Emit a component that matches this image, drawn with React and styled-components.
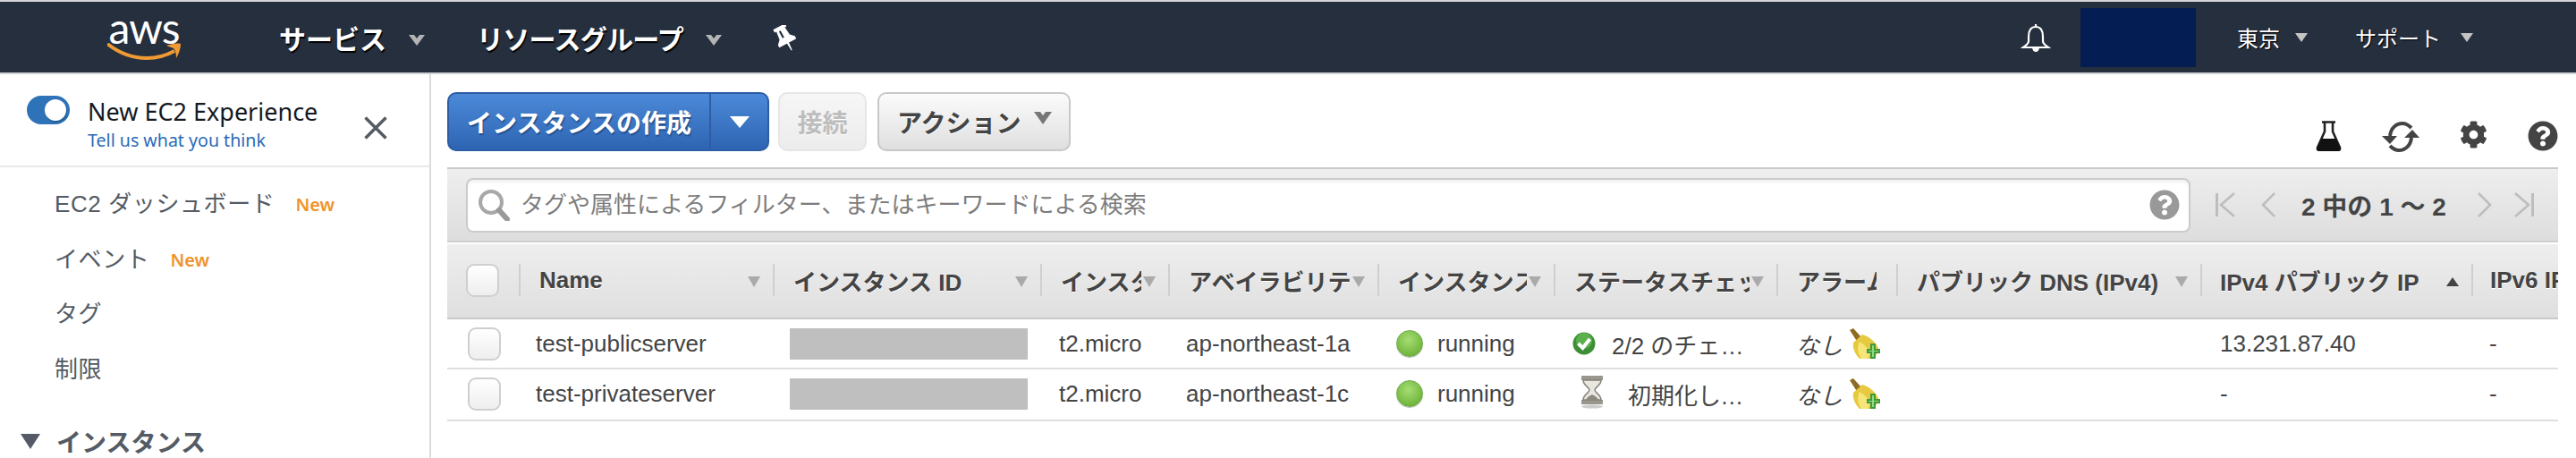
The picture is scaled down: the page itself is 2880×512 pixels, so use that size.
import React from 'react';
import styled, { createGlobalStyle } from 'styled-components';
import { FaCog, FaQuestionCircle } from 'react-icons/fa';

const GlobalStyle = createGlobalStyle`
  html, body {
    margin: 0;
    padding: 0;
    background: #fff;
  }
  * {
    box-sizing: border-box;
  }
  body {
    font-family: "Liberation Sans", "Noto Sans CJK JP", sans-serif;
  }
`;

const Page = styled.div`
  width: 2880px;
  height: 512px;
  overflow: hidden;
  background: #fff;
`;

const Header = styled.header`
  height: 83px;
  display: flex;
  align-items: center;
  padding-left: 120px;
  background: #262f3e;
  border-top: 2px solid #d5d5d5;
  border-bottom: 2px solid #cfd0d2;
  color: #fff;
`;

const Logo = styled.div`
  width: 82px;
  height: 56px;
  margin-right: 110px;
  display: flex;
  flex-direction: column;
  align-items: center;
`;

const LogoText = styled.span`
  font-family: Lato, sans-serif;
  font-size: 48px;
  line-height: 34px;
  height: 34px;
  color: #fff;
  letter-spacing: -1px;
`;

const NavItem = styled.div`
  display: flex;
  align-items: center;
  font-size: 30px;
  font-weight: 700;
  letter-spacing: ${p => p.$tight ? '-0.7px' : '0'};
  margin-right: ${p => p.$gap}px;
  text-shadow: 1px 2px 1px #000;
`;

const NavChevronIcon = styled.svg`
  width: 18px;
  height: 12px;
  margin: 6px 0 0 25px;
`;

const PinSvg = styled.svg`
  width: 28px;
  height: 30px;
  margin: 2px 0 0 57px;
`;

const RightNav = styled.div`
  margin-left: auto;
  display: flex;
  align-items: center;
  height: 100%;
`;

const Masked = styled.div`
  width: 129px;
  height: 66px;
  margin: 0 46px 0 33px;
  background: #041d52;
`;

const RegionItem = styled.div`
  display: flex;
  align-items: center;
  font-size: 24px;
  margin-right: ${p => p.$gap}px;
  text-shadow: 1px 1px 1px #000;
`;

const SmallCaret = styled.svg`
  width: 14px;
  height: 10px;
  margin-left: ${p => p.$left}px;
`;

const Body = styled.div`
  display: flex;
  height: 429px;
`;

const Sidebar = styled.aside`
  width: 482px;
  flex-shrink: 0;
  border-right: 2px solid #dcdcdc;
  overflow: hidden;
`;

const Experience = styled.div`
  height: 104px;
  display: flex;
  align-items: flex-start;
  padding: 24px 47px 0 30px;
  border-bottom: 2px solid #e8e8e8;
`;

const Toggle = styled.div`
  width: 48px;
  height: 32px;
  margin-right: 20px;
  padding-right: 4px;
  display: flex;
  align-items: center;
  justify-content: flex-end;
  border-radius: 16px;
  background: #2e73b8;
`;

const Knob = styled.span`
  width: 24px;
  height: 24px;
  border-radius: 50%;
  background: #fff;
  box-shadow: 1px 2px 0 #235f99;
`;

const ExperienceText = styled.div`
  flex: 1;
  font-family: "Noto Sans", sans-serif;
`;

const ExperienceTitle = styled.div`
  font-size: 27px;
  line-height: 36px;
  color: #16191f;
`;

const FeedbackLink = styled.div`
  font-size: 19.6px;
  line-height: 28px;
  color: #2a6ab8;
`;

const CloseIcon = styled.svg`
  width: 26px;
  height: 26px;
  margin-top: 23px;
`;

const SideList = styled.nav`
  padding: 8px 0 0 61px;
`;

const SideItem = styled.div`
  height: 61.5px;
  display: flex;
  align-items: center;
  font-size: 26px;
  letter-spacing: 0.6px;
  color: #545b64;
`;

const NewBadge = styled.span`
  margin-left: ${p => p.$left}px;
  margin-top: 6px;
  font-family: "Noto Sans", sans-serif;
  font-size: 20px;
  font-weight: 600;
  letter-spacing: 0;
  color: #f0932b;
`;

const SideGroup = styled.div`
  display: flex;
  align-items: center;
  margin: 32px 0 0 23px;
  font-size: 28px;
  font-weight: 700;
  color: #545b64;
`;

const GroupArrow = styled.span`
  width: 0;
  height: 0;
  margin-right: 18px;
  border-left: 11px solid transparent;
  border-right: 11px solid transparent;
  border-top: 17px solid #545b64;
`;

const Main = styled.main`
  flex: 1;
  min-width: 0;
  padding: 20px 20px 0 18px;
`;

const Toolbar = styled.div`
  height: 66px;
  display: flex;
  align-items: stretch;
`;

const ButtonGroup = styled.div`
  width: 360px;
  display: flex;
  border: 2px solid #2c5da5;
  border-radius: 10px;
  overflow: hidden;
  margin-right: 10px;
  background: linear-gradient(#4b89d8, #2e65b2);
`;

const PrimaryLabel = styled.div`
  width: 293px;
  padding-left: 20px;
  display: flex;
  align-items: center;
  font-size: 28px;
  font-weight: 700;
  color: #fff;
  text-shadow: 1px 2px 1px #24508f;
  border-right: 2px solid #2c5da5;
`;

const PrimaryCaret = styled.div`
  flex: 1;
  display: flex;
  align-items: center;
  justify-content: center;

  &::after {
    content: "";
    width: 0;
    height: 0;
    border-left: 11px solid transparent;
    border-right: 11px solid transparent;
    border-top: 13px solid #fff;
  }
`;

const GrayButton = styled.div`
  width: ${p => p.$width}px;
  display: flex;
  align-items: center;
  justify-content: ${p => p.$center ? 'center' : 'flex-start'};
  padding-left: ${p => p.$center ? 0 : 20}px;
  margin-right: 12px;
  border: 2px solid ${p => p.$off ? '#e6e6e6' : '#c8c8c8'};
  border-radius: 10px;
  background: linear-gradient(${p => p.$off ? '#f6f6f6, #ececec' : '#fbfbfb, #dfdfdf'});
  font-size: 28px;
  font-weight: 700;
  color: ${p => p.$off ? '#bdbdbd' : '#444'};
  text-shadow: 0 1px 1px #fff;
`;

const ActionChevron = styled.svg`
  width: 20px;
  height: 14px;
  margin: 0 0 8px 14px;
`;

const ToolIcons = styled.div`
  margin-left: auto;
  padding-top: 32px;
  display: flex;
  align-items: flex-start;
  color: #444;
`;

const ToolSlot = styled.div`
  margin-left: ${p => p.$left}px;
  display: flex;
`;

const FilterBar = styled.div`
  height: 84px;
  margin-top: 18px;
  display: flex;
  align-items: center;
  padding-left: 21px;
  border-top: 2px solid #c9c9c9;
  border-bottom: 2px solid #cfcfcf;
  background: linear-gradient(#eeeeee, #dddddd);
`;

const SearchBox = styled.div`
  width: 1928px;
  height: 61px;
  display: flex;
  align-items: center;
  padding: 0 10px 0 11px;
  border: 2px solid #cbcbcb;
  border-radius: 8px;
  background: #fff;
  box-shadow: inset 0 4px 4px -2px #ececec;
  color: #999;
`;

const SearchSvg = styled.svg`
  width: 36px;
  height: 36px;
  flex-shrink: 0;
`;

const SearchInput = styled.input`
  flex: 1;
  margin-left: 12px;
  border: 0;
  outline: 0;
  padding: 0;
  background: transparent;
  font-family: "Liberation Sans", "Noto Sans CJK JP", sans-serif;
  font-size: 26px;

  &::placeholder {
    color: #7d7d7d;
    opacity: 1;
  }
`;

const Pager = styled.div`
  width: 391px;
  display: flex;
  align-items: center;
  padding-left: 28px;
`;

const PagerIcon = styled.svg`
  height: 28px;
  width: ${p => p.$width}px;
  margin-right: ${p => p.$right}px;
  flex-shrink: 0;
`;

const PagerText = styled.div`
  width: 165px;
  margin-right: 32px;
  font-size: 28px;
  font-weight: 700;
  letter-spacing: 0;
  color: #444;
  white-space: nowrap;
`;

const COLUMNS = '80px 284px 299px 143px 234px 197px 249px 134px 340px 303px 220px';

const TableWrap = styled.div`
  margin-top: 2px;
  overflow: hidden;
`;

const HeadRow = styled.div`
  height: 84px;
  display: grid;
  grid-template-columns: ${COLUMNS};
  padding-top: 22px;
  border-bottom: 2px solid #c9c9c9;
  background: linear-gradient(#eeeeee, #dfdfdf);
`;

const HeadCell = styled.div`
  height: 36px;
  display: flex;
  align-items: center;
  padding-left: ${p => p.$left ?? 21}px;
  padding-right: ${p => p.$noArrow ? 22 : 0}px;
  border-left: ${p => p.$first ? 0 : '2px solid #cfcfcf'};
  min-width: 0;
`;

const HeadLabel = styled.div`
  flex: 1;
  min-width: 0;
  overflow: hidden;
  white-space: nowrap;
  font-size: 26px;
  font-weight: 700;
  color: #444;
  text-shadow: 0 1px 0 #fff;
`;

const SortArrow = styled.span`
  width: 0;
  height: 0;
  margin: 4px 14px 0 2px;
  flex-shrink: 0;
  border-left: 7px solid transparent;
  border-right: 7px solid transparent;
  border-top: ${p => p.$up ? '0' : '12px solid #aaa'};
  border-bottom: ${p => p.$up ? '10px solid #444' : '0'};
`;

const CheckBox = styled.div`
  width: 37px;
  height: 37px;
  border: 2px solid #cfcfcf;
  border-radius: 9px;
  background: linear-gradient(#ffffff, #eeeeee);
`;

const Row = styled.div`
  height: 56px;
  display: grid;
  grid-template-columns: ${COLUMNS};
  border-bottom: 2px solid #dedede;

  &:last-child {
    height: 58px;
    padding-bottom: 2px;
  }
`;

const Cell = styled.div`
  display: flex;
  align-items: center;
  padding-left: ${p => p.$left ?? 21}px;
  min-width: 0;
  font-size: 26px;
  color: #444;
  white-space: nowrap;
  font-style: ${p => p.$italic ? 'italic' : 'normal'};
`;

const MaskedId = styled.div`
  width: 266px;
  height: 35px;
  background: #bfbfbf;
`;

const StatusText = styled.span`
  margin-left: ${p => p.$left}px;
  width: ${p => p.$width}px;
  overflow: hidden;
  text-overflow: ellipsis;
`;

const HourglassSvg = styled.svg`
  width: 28px;
  height: 38px;
  margin-bottom: 4px;
`;

const BroomSvg = styled.svg`
  width: 36px;
  height: 34px;
  margin-left: 7px;
  flex-shrink: 0;
`;

const RunningDot = styled.span`
  width: 30px;
  height: 30px;
  margin-right: 16px;
  border-radius: 50%;
  border: 1px solid #6fa94a;
  background: radial-gradient(circle at 45% 35%, #a6dd75, #6fb53a 75%);
  box-shadow: 0 1px 1px #bbb;
`;

const Caret = ({ left }) => (
  <SmallCaret $left={left} viewBox="0 0 14 10">
    <path d="M0 0h14L7 10z" fill="#c4c4c4" />
  </SmallCaret>
);

const NavChevron = () => (
  <NavChevronIcon viewBox="0 0 18 12">
    <path d="M0 0h6l3 4 3-4h6L9 12z" fill="#b4b4b4" />
  </NavChevronIcon>
);

const AwsLogo = () => (
  <Logo>
    <LogoText>aws</LogoText>
    <svg width="82" height="20" viewBox="0 0 82 20">
      <path d="M0 1C14 12 30 17 44 17 56 17 66 14 75 9" fill="none" stroke="#f09a34" strokeWidth="4" />
      <path d="M66 3C72 1 78 0 82 1 82 6 80 12 77 17 77 12 76 8 74 6z" fill="#f09a34" />
    </svg>
  </Logo>
);

const PinIcon = () => (
  <PinSvg viewBox="0 0 26 28">
    <g transform="rotate(-28 13 14)">
      <path d="M6 0h14v3.500h-2l1 9 4 4v3H3v-3l4-4 1-9H6z" fill="#fff" />
      <path d="M12 19h2.400l-.7 9h-1z" fill="#fff" />
      <path d="M10.500 4.500h2v8h-2z" fill="#262f3e" />
    </g>
  </PinSvg>
);

const BellIcon = () => (
  <svg width="34" height="32" viewBox="0 0 34 32">
    <path
      d="M17 1v3M17 4c-6 0-8 5-8 11v5c0 3-3 5-6 7h28c-3-2-6-4-6-7v-5c0-6-2-11-8-11z"
      fill="none"
      stroke="#fff"
      strokeWidth="2.200"
    />
    <path d="M13 27h8c0 3-2 5-4 5s-4-2-4-5z" fill="#fff" />
  </svg>
);

const FlaskIcon = () => (
  <svg width="31" height="34" viewBox="0 0 31 34">
    <path d="M8 1.500h15M11 2v10L3 30c-.5 1.500 0 2.500 2 2.500h21c2 0 2.500-1 2-2.500L20 12V2" fill="none" stroke="#222" strokeWidth="2.600" />
    <path d="M7.500 20h16L29 32c0 1-1 2-3 2H5c-2 0-3-1-3-2z" fill="#111" />
  </svg>
);

const RefreshIcon = () => (
  <svg width="42" height="36" viewBox="0 0 42 36">
    <path d="M9 17C10 8 16 3 23 3c4 0 7 2 10 5" fill="none" stroke="#444" strokeWidth="4" />
    <path d="M33 19c-1 9-7 14-14 14-4 0-7-2-10-5" fill="none" stroke="#444" strokeWidth="4" />
    <path d="M0 17h17l-8 9zM25 19h17l-8-9z" fill="#444" />
  </svg>
);

const SearchIcon = () => (
  <SearchSvg viewBox="0 0 36 36">
    <circle cx="15" cy="15" r="12" fill="none" stroke="#a8a8a8" strokeWidth="4" />
    <path d="M24 24l9 10" stroke="#999" strokeWidth="6" strokeLinecap="round" />
  </SearchSvg>
);

const PagerChevron = ({ dir, bar, width, right }) => (
  <PagerIcon $width={width} $right={right} viewBox={`0 0 ${width} 28`}>
    {bar && <path d={dir === 'l' ? 'M1.500 1v26' : `M${width - 1.500} 1v26`} stroke="#bdbdbd" strokeWidth="3" />}
    <path
      d={dir === 'l'
        ? `M${width - 1} 1L${bar ? 6 : 2} 14l${width - (bar ? 7 : 3)} 13`
        : `M1 1l${width - (bar ? 7 : 3)} 13L1 27`}
      fill="none"
      stroke="#bdbdbd"
      strokeWidth="2.600"
    />
  </PagerIcon>
);

const CheckIcon = () => (
  <svg width="26" height="28" viewBox="0 0 26 28">
    <circle cx="13" cy="14" r="12.500" fill="#3c8f36" />
    <circle cx="13" cy="11" r="9" fill="#5cb04e" />
    <path d="M6.500 14l5 5 8-10" fill="none" stroke="#fff" strokeWidth="4" />
  </svg>
);

const HourglassIcon = () => (
  <HourglassSvg viewBox="0 0 28 38">
    <path d="M2 1h24v5H2zM2 28h24v5H2z" fill="#9a978f" />
    <path d="M4 6h20c0 6-7 8-7 11s7 5 7 11H4c0-6 7-8 7-11S4 12 4 6z" fill="#e9e7e0" stroke="#86837b" strokeWidth="1.500" />
    <path d="M7 28c1-3 5-5 7-6 2 1 6 3 7 6z" fill="#8c8980" />
    <ellipse cx="14" cy="35.500" rx="12" ry="2" fill="#ccc" />
  </HourglassSvg>
);

const BroomIcon = () => (
  <BroomSvg viewBox="0 0 36 34">
    <path d="M1 2l4-2 10 11-5 5z" fill="#8f6a25" />
    <path d="M5 16l10-9c8 2 15 8 19 17l-6 10H12C7 29 4 22 5 16z" fill="#e6c93f" />
    <path d="M12 15c5 3 10 8 12 13l-3 6h-7c-4-6-5-13-2-19z" fill="#f6e679" />
    <path d="M24 17h6v6h5v5h-5v6h-6v-6h-4v-5h4z" fill="#3f9a3b" />
    <path d="M26 19h2v6h5v1h-5v6h-2v-6h-4v-1h4z" fill="#8fdc7e" />
  </BroomSvg>
);

const headers = [
  { label: 'Name' },
  { label: 'インスタンス ID' },
  { label: 'インスタンスタイプ' },
  { label: 'アベイラビリティーゾーン' },
  { label: 'インスタンスの状態' },
  { label: 'ステータスチェック' },
  { label: 'アラームのステータス', noArrow: true },
  { label: 'パブリック DNS (IPv4)' },
  { label: 'IPv4 パブリック IP', up: true, left: 20 },
  { label: 'IPv6 IP', noArrow: true, left: 19 },
];

const rows = [
  {
    name: 'test-publicserver',
    zone: 'ap-northeast-1a',
    check: <><CheckIcon /><StatusText $left={18} $width={148}>2/2 のチェックに合格しました</StatusText></>,
    checkLeft: 21,
    ip: '13.231.87.40',
  },
  {
    name: 'test-privateserver',
    zone: 'ap-northeast-1c',
    check: <><HourglassIcon /><StatusText $left={26} $width={132}>初期化しています</StatusText></>,
    checkLeft: 29,
    ip: '-',
  },
];

const App = () => (
  <Page>
    <GlobalStyle />
    <Header>
      <AwsLogo />
      <NavItem $gap={58}>サービス<NavChevron /></NavItem>
      <NavItem $tight $gap={0}>リソースグループ<NavChevron /></NavItem>
      <PinIcon />
      <RightNav>
        <BellIcon />
        <Masked />
        <RegionItem $gap={53}>東京<Caret left={17} /></RegionItem>
        <RegionItem $gap={115}>サポート<Caret left={22} /></RegionItem>
      </RightNav>
    </Header>
    <Body>
      <Sidebar>
        <Experience>
          <Toggle><Knob /></Toggle>
          <ExperienceText>
            <ExperienceTitle>New EC2 Experience</ExperienceTitle>
            <FeedbackLink>Tell us what you think</FeedbackLink>
          </ExperienceText>
          <CloseIcon viewBox="0 0 26 26">
            <path d="M1.500 1.500l23 23M24.500 1.500l-23 23" stroke="#545b64" strokeWidth="3.500" />
          </CloseIcon>
        </Experience>
        <SideList>
          <SideItem>EC2 ダッシュボード<NewBadge $left={23}>New</NewBadge></SideItem>
          <SideItem>イベント<NewBadge $left={23}>New</NewBadge></SideItem>
          <SideItem>タグ</SideItem>
          <SideItem>制限</SideItem>
        </SideList>
        <SideGroup><GroupArrow />インスタンス</SideGroup>
      </Sidebar>
      <Main>
        <Toolbar>
          <ButtonGroup>
            <PrimaryLabel>インスタンスの作成</PrimaryLabel>
            <PrimaryCaret />
          </ButtonGroup>
          <GrayButton $off $center $width={99}>接続</GrayButton>
          <GrayButton $width={216}>
            アクション
            <ActionChevron viewBox="0 0 20 14">
              <path d="M0 0h7l3 4 3-4h7L10 14z" fill="#777" />
            </ActionChevron>
          </GrayButton>
          <ToolIcons>
            <FlaskIcon />
            <ToolSlot $left={44}><RefreshIcon /></ToolSlot>
            <ToolSlot $left={45}><FaCog size={31} /></ToolSlot>
            <ToolSlot $left={45}><FaQuestionCircle size={34} /></ToolSlot>
          </ToolIcons>
        </Toolbar>
        <FilterBar>
          <SearchBox>
            <SearchIcon />
            <SearchInput placeholder="タグや属性によるフィルター、またはキーワードによる検索" readOnly />
            <FaQuestionCircle size={34} />
          </SearchBox>
          <Pager>
            <PagerChevron dir="l" bar width={22} right={29} />
            <PagerChevron dir="l" width={16} right={29} />
            <PagerText>2 中の 1 〜 2</PagerText>
            <PagerChevron dir="r" width={16} right={25} />
            <PagerChevron dir="r" bar width={22} right={0} />
          </Pager>
        </FilterBar>
        <TableWrap>
          <HeadRow>
            <HeadCell $first><CheckBox /></HeadCell>
            {headers.map(h => (
              <HeadCell key={h.label} $noArrow={h.noArrow} $left={h.left}>
                <HeadLabel>{h.label}</HeadLabel>
                {!h.noArrow && <SortArrow $up={h.up} />}
              </HeadCell>
            ))}
          </HeadRow>
          {rows.map(r => (
            <Row key={r.name}>
              <Cell $left={23}><CheckBox /></Cell>
              <Cell $left={19}>{r.name}</Cell>
              <Cell $left={19}><MaskedId /></Cell>
              <Cell>t2.micro</Cell>
              <Cell $left={20}>{r.zone}</Cell>
              <Cell><RunningDot />running</Cell>
              <Cell $left={r.checkLeft}>{r.check}</Cell>
              <Cell $italic $left={22}>なし<BroomIcon /></Cell>
              <Cell />
              <Cell $left={22}>{r.ip}</Cell>
              <Cell $left={20}>-</Cell>
            </Row>
          ))}
        </TableWrap>
      </Main>
    </Body>
  </Page>
);

export default App;
